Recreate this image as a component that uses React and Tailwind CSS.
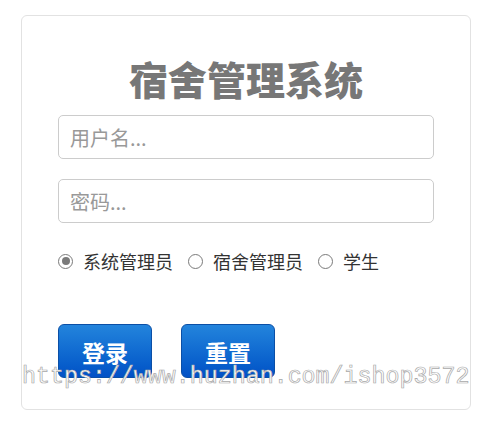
import React, { useState } from 'react';

const roles = ['系统管理员', '宿舍管理员', '学生'];

const Radio = ({ checked, label, onClick }) => (
  <label className="flex items-center cursor-pointer" onClick={onClick}>
    <span className="w-[15px] h-[15px] rounded-full border border-[#7a7a7a] bg-white flex items-center justify-center">
      {checked && <span className="w-[8px] h-[8px] rounded-full bg-[#7a7a7a]" />}
    </span>
    <span className="ml-[10px] text-[18px] leading-[20px] text-[#333]">{label}</span>
  </label>
);

export default function App() {
  const [role, setRole] = useState(0);

  return (
    <div className="relative w-[493px] h-[426px] bg-white font-['Microsoft_YaHei','Noto_Sans_CJK_SC',sans-serif] overflow-hidden">
      <div className="ml-[21px] mt-[15px] w-[450px] border border-[#e2e2e2] rounded-[6px] px-[36px] pb-[31px]">
        <h1 className="pt-[38px] h-[86px] leading-[48px] text-center text-[39px] font-black text-[#777]">
          宿舍管理系统
        </h1>
        <div className="mt-[13px] flex flex-col gap-[20px]">
          <input
            placeholder="用户名..."
            className="h-[44px] w-full border border-[#cccccc] rounded-[5px] px-[11px] text-[20px] text-[#555] placeholder:text-[#999] outline-none"
          />
          <input
            type="password"
            placeholder="密码..."
            className="h-[44px] w-full border border-[#cccccc] rounded-[5px] px-[11px] text-[20px] text-[#555] placeholder:text-[#999] outline-none"
          />
        </div>
        <div className="mt-[28px] flex items-center gap-[15px]">
          {roles.map((r, i) => (
            <Radio key={r} label={r} checked={role === i} onClick={() => setRole(i)} />
          ))}
        </div>
        <div className="mt-[53px] flex gap-[29px]">
          <button className="w-[94px] h-[54px] pt-[2px] rounded-[6px] border border-[#0b4fa6] bg-gradient-to-b from-[#2384dc] to-[#0351c6] text-white text-[23px] font-bold">
            登录
          </button>
          <button className="w-[94px] h-[54px] pt-[2px] rounded-[6px] border border-[#0b4fa6] bg-gradient-to-b from-[#2384dc] to-[#0351c6] text-white text-[23px] font-bold">
            重置
          </button>
        </div>
      </div>
      <div className="absolute left-[22px] top-[363px] text-[23.3px] leading-[28px] font-['Liberation_Mono',monospace] text-white [-webkit-text-stroke:0.7px_#a8a8a8] pointer-events-none whitespace-nowrap">
        https://www.huzhan.com/ishop3572
      </div>
    </div>
  );
}
